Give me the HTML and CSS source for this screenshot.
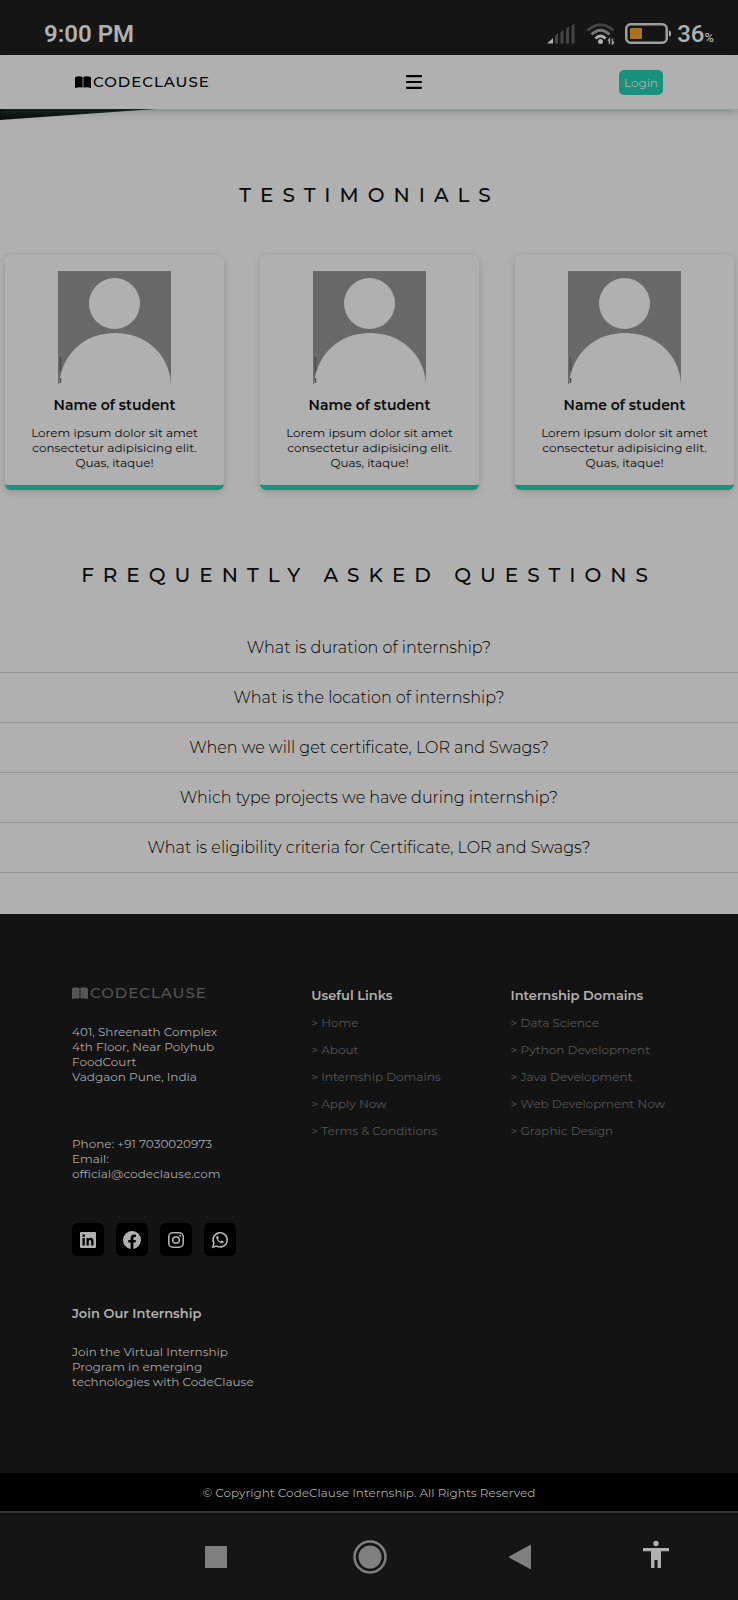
FILE: index.html
```html
<!DOCTYPE html>
<html lang="en">
<head>
<meta charset="utf-8">
<meta name="viewport" content="width=device-width, initial-scale=1">
<title>CodeClause Internship</title>
<link rel="stylesheet" href="styles.css">
</head>
<body>
<svg class="sprite" aria-hidden="true">
  <symbol id="book" viewBox="0 0 16 12"><path d="M0 1.200Q4-.6 7.600 .9V11.600Q4 10.600 0 12zM8.400 .9Q12-.6 16 1.200V12Q12 10.600 8.400 11.600z"/></symbol>
  <symbol id="person" viewBox="0 0 113 113"><path class="photo-back" d="M0 0h113v113H0z"/><circle class="photo-shape" cx="56.5" cy="32.500" r="25.500"/><path class="photo-shape" d="M1 113C4 82 27 62 57 62s54 20 56 51z"/><path class="photo-mark" d="M2.500 86v14M2.500 107v5"/></symbol>
</svg>

<div class="status">
  <span class="clock">9:00 PM</span>
  <div class="indicators">
    <svg class="signal" viewBox="0 0 28 20" aria-label="Signal"><path class="lit" d="M0 19.500 6 14v5.500z"/><path class="dim" d="M8 11.500l3-2v10H8zM13.500 8l3-2v13.500h-3zM19 4.500l3-2v17h-3zM24.500 1.500l3-1.500v19.500h-3z"/></svg>
    <svg class="wifi" viewBox="0 0 30 22" aria-label="Wi-Fi"><path class="arc dim-arc" d="M1.500 7.500Q14.500-4 27.500 7.500"/><path class="arc mid-arc" d="M5.500 11.500Q14.500 3 23.500 11.500"/><path class="arc" d="M9.500 15.500Q14.500 10.500 19.500 15.500"/><circle class="lit" cx="14.500" cy="18.500" r="2.500"/><path class="traffic" d="M23.500 21v-5l-1.500 2M26.500 15.500v5.500l1.500-2"/></svg>
    <svg class="battery" viewBox="0 0 46 22" aria-label="Battery"><rect class="case" x="1.250" y="1.250" width="40.500" height="18.500" rx="4.500"/><rect class="charge" x="5" y="5" width="12" height="11" rx="1"/><path class="lit" d="M44 7.500q2 0 2 2v2q0 2-2 2z"/></svg>
    <span class="percent">36<small>%</small></span>
  </div>
</div>

<header class="nav">
  <a class="brand" href="#"><svg class="book"><use href="#book"/></svg>CODECLAUSE</a>
  <button class="menu" type="button" aria-label="Menu"><svg viewBox="0 0 16 14"><path d="M1 1.200h14M1 7h14M1 12.800h14"/></svg></button>
  <button class="login" type="button">Login</button>
</header>

<main class="main">
  <svg class="wedge" viewBox="0 0 155 11" aria-hidden="true"><path d="M0 0h155L0 11z"/></svg>

  <section class="testimonials">
    <h2 class="title">TESTIMONIALS</h2>
    <div class="cards">
      <article class="card">
        <svg class="photo" role="img" aria-label="Student"><use href="#person"/></svg>
        <h3 class="name">Name of student</h3>
        <p class="quote">Lorem ipsum dolor sit amet<br>consectetur adipisicing elit.<br>Quas, itaque!</p>
      </article>
      <article class="card">
        <svg class="photo" role="img" aria-label="Student"><use href="#person"/></svg>
        <h3 class="name">Name of student</h3>
        <p class="quote">Lorem ipsum dolor sit amet<br>consectetur adipisicing elit.<br>Quas, itaque!</p>
      </article>
      <article class="card">
        <svg class="photo" role="img" aria-label="Student"><use href="#person"/></svg>
        <h3 class="name">Name of student</h3>
        <p class="quote">Lorem ipsum dolor sit amet<br>consectetur adipisicing elit.<br>Quas, itaque!</p>
      </article>
    </div>
  </section>

  <section class="faq">
    <h2 class="title">FREQUENTLY ASKED QUESTIONS</h2>
    <div class="questions">
      <button class="question" type="button">What is duration of internship?</button>
      <button class="question" type="button">What is the location of internship?</button>
      <button class="question" type="button">When we will get certificate, LOR and Swags?</button>
      <button class="question" type="button">Which type projects we have during internship?</button>
      <button class="question" type="button">What is eligibility criteria for Certificate, LOR and Swags?</button>
    </div>
  </section>
</main>

<footer class="footer">
  <div class="columns">
    <div class="about">
      <a class="brand muted" href="#"><svg class="book"><use href="#book"/></svg>CODECLAUSE</a>
      <address class="address">401, Shreenath Complex<br>4th Floor, Near Polyhub<br>FoodCourt<br>Vadgaon Pune, India</address>
      <p class="contact">Phone: +91 7030020973<br>Email:<br>official@codeclause.com</p>
      <div class="social">
        <a class="tile" href="#" aria-label="LinkedIn"><svg viewBox="0 0 18 18"><path fill-rule="evenodd" d="M2 1h14a1 1 0 0 1 1 1v14a1 1 0 0 1-1 1H2a1 1 0 0 1-1-1V2a1 1 0 0 1 1-1zM3.500 7v7.500h2.300V7zM4.650 3.300a1.350 1.350 0 1 0 0 2.700 1.350 1.350 0 0 0 0-2.700zM7.500 7v7.500h2.300v-3.900c0-2 2.400-2 2.400 0v3.900h2.300V10c0-3.500-3.500-3.900-4.700-2V7z"/></svg></a>
        <a class="tile" href="#" aria-label="Facebook"><svg viewBox="0 0 18 18"><path d="M18 9a9 9 0 1 0-10.400 8.900v-6.300H5.300V9h2.300V7c0-2.300 1.300-3.500 3.400-3.500 1 0 2 .2 2 .2v2.200h-1.100c-1.100 0-1.500.7-1.500 1.400V9h2.500l-.4 2.600h-2.100v6.300A9 9 0 0 0 18 9z"/></svg></a>
        <a class="tile" href="#" aria-label="Instagram"><svg class="lined" viewBox="0 0 18 18"><rect x="1.800" y="1.800" width="14.400" height="14.400" rx="4"/><circle cx="9" cy="9" r="3.300"/><circle class="dot" cx="13.200" cy="4.800" r="1"/></svg></a>
        <a class="tile" href="#" aria-label="WhatsApp"><svg class="lined" viewBox="0 0 18 18"><path d="M1.800 16.200l1.100-3.900a7.100 7.100 0 1 1 2.800 2.800z"/><path class="dot" d="M6.500 4.800c-.6 0-1.300.8-1.300 1.800 0 2.300 3.300 5.700 5.700 5.700 1.100 0 2-.8 2-1.600 0-.5-1.800-1.300-2.200-1.300-.4 0-.7 1-1.100 1-.8 0-2.500-1.600-2.500-2.200 0-.3.700-.7.700-1.200S7.100 4.800 6.500 4.800z"/></svg></a>
      </div>
      <h3 class="heading">Join Our Internship</h3>
      <p class="join">Join the Virtual Internship<br>Program in emerging<br>technologies with CodeClause</p>
    </div>
    <nav class="links" aria-label="Useful Links">
      <h3 class="heading">Useful Links</h3>
      <a href="#">&gt; Home</a>
      <a href="#">&gt; About</a>
      <a href="#">&gt; Internship Domains</a>
      <a href="#">&gt; Apply Now</a>
      <a href="#">&gt; Terms &amp; Conditions</a>
    </nav>
    <nav class="links" aria-label="Internship Domains">
      <h3 class="heading">Internship Domains</h3>
      <a href="#">&gt; Data Science</a>
      <a href="#">&gt; Python Development</a>
      <a href="#">&gt; Java Development</a>
      <a href="#">&gt; Web Development Now</a>
      <a href="#">&gt; Graphic Design</a>
    </nav>
  </div>
  <p class="copyright">© Copyright CodeClause Internship. All Rights Reserved</p>
</footer>

<div class="system">
  <button class="key" type="button" aria-label="Recent apps"><svg viewBox="0 0 34 34"><rect x="6" y="6" width="22" height="22" rx="1"/></svg></button>
  <button class="key" type="button" aria-label="Home"><svg viewBox="0 0 34 34"><circle class="ring" cx="17" cy="17" r="15.500"/><circle cx="17" cy="17" r="11.500"/></svg></button>
  <button class="key" type="button" aria-label="Back"><svg viewBox="0 0 34 34"><path d="M6.500 16.200 27 5q1-.5 1 .7v22.600q0 1.200-1 .7L6.500 17.800q-1-.8 0-1.600z"/></svg></button>
  <button class="key bright" type="button" aria-label="Accessibility"><svg viewBox="0 0 34 34"><circle cx="17" cy="3.500" r="2.700"/><path d="M4 8h26v3.200h-8V28h-3.500v-8h-3v8H12V11.200H4z"/></svg></button>
</div>
</body>
</html>
```
FILE: styles.css
```css
* {
  box-sizing: border-box;
}

body {
  margin: 0;
  background: #b0b0b0;
  color: #0a0a0a;
  font-family: Montserrat, Inter, "Open Sans", sans-serif;
  font-size: 12px;
  line-height: 15px;
}

h2, h3, p {
  margin: 0;
}

a {
  color: inherit;
  text-decoration: none;
}

button {
  padding: 0;
  border: 0;
  background: none;
  color: inherit;
  font: inherit;
}

svg {
  display: block;
}

.sprite {
  display: none;
}

/* Phone status bar */
.status {
  display: flex;
  align-items: center;
  justify-content: space-between;
  height: 55px;
  padding: 13px 24px 0 44px;
  background: #151515;
  color: #b0b0b0;
  font-family: Roboto, sans-serif;
  font-size: 24px;
  font-weight: 500;
  line-height: 26px;
}

.clock {
  font-weight: 600;
}

.indicators {
  display: flex;
  align-items: center;
}

.signal {
  width: 28px;
  height: 20px;
  margin-right: 11px;
}

.wifi {
  width: 30px;
  height: 22px;
  margin-right: 9px;
}

.battery {
  width: 46px;
  height: 22px;
  margin-right: 6px;
}

.lit {
  fill: #b0b0b0;
}

.dim {
  fill: #444;
}

.arc {
  fill: none;
  stroke: #b0b0b0;
  stroke-width: 3;
}

.mid-arc {
  stroke: #777;
}

.dim-arc {
  stroke: #444;
}

.traffic {
  fill: none;
  stroke: #999;
  stroke-width: 1.5;
}

.case {
  fill: none;
  stroke: #a0a0a0;
  stroke-width: 2.5;
}

.charge {
  fill: #a87320;
}

.percent small {
  font-size: 13px;
  line-height: 1;
}

/* Site header */
.nav {
  position: relative;
  display: flex;
  align-items: center;
  justify-content: space-between;
  height: 54px;
  padding: 0 75px;
  background: #b0b0b0;
  box-shadow: 0 3px 8px rgba(50, 80, 75, 0.35);
}

.brand {
  display: flex;
  align-items: center;
  gap: 2px;
  color: #000;
  font-size: 15px;
  font-weight: 500;
  letter-spacing: 1px;
  line-height: 18px;
}

.book {
  width: 16px;
  height: 12px;
  fill: currentColor;
}

.menu svg {
  width: 16px;
  height: 14px;
  stroke: #000;
  stroke-width: 2.2;
  stroke-linecap: round;
  overflow: visible;
}

.login {
  padding: 4px 5px;
  border-radius: 5px;
  background: #18917d;
  color: #b0b0b0;
  line-height: 17px;
}

/* Page content */
.wedge {
  width: 21%;
  height: 11px;
  fill: #0d1211;
}

.title {
  font-size: 20px;
  font-weight: 500;
  letter-spacing: 9px;
  line-height: 24px;
  text-align: center;
}

.testimonials {
  padding: 63px 4px 0 5px;
}

.cards {
  display: grid;
  grid-template-columns: repeat(3, 1fr);
  gap: 36px;
  margin-top: 48px;
}

.card {
  display: flex;
  flex-direction: column;
  align-items: center;
  padding: 16px 8px 15px;
  border-bottom: 5px solid #18917d;
  border-radius: 6px;
  box-shadow: 0 2px 7px rgba(0, 0, 0, 0.15);
  text-align: center;
}

.photo {
  width: 113px;
  height: 113px;
}

.photo-back {
  fill: #696969;
}

.photo-shape {
  fill: #b0b0b0;
}

.photo-mark {
  stroke: #4c4c4c;
  stroke-width: 1.5;
}

.name {
  margin: 12px 0 11px;
  font-size: 14px;
  font-weight: 600;
  line-height: 18px;
}

.faq {
  padding: 73px 0 41px;
}

.questions {
  margin-top: 36px;
}

.question {
  display: block;
  width: 100%;
  height: 50px;
  border-bottom: 1px solid #959595;
  color: #000;
  font-size: 16px;
  font-weight: 300;
}

/* Footer */
.footer {
  background: #131313;
  color: #a8a8a8;
}

.columns {
  display: grid;
  grid-template-columns: 6fr 5fr 4fr;
  padding: 70px 68px 84px 72px;
}

.muted {
  color: #555;
}

.address {
  margin: 22px 0 52px;
  font-style: normal;
}

.social {
  display: flex;
  gap: 12px;
  margin: 42px 0 48px;
}

.tile {
  display: grid;
  place-items: center;
  width: 32px;
  height: 33px;
  border-radius: 5px;
  background: #000;
}

.tile svg {
  width: 18px;
  height: 18px;
  fill: #b0b0b0;
}

.tile .lined {
  fill: none;
  stroke: #b0b0b0;
  stroke-width: 1.6;
}

.tile .dot {
  fill: #b0b0b0;
  stroke: none;
}

.heading {
  color: #b0b0b0;
  font-size: 13px;
  font-weight: 600;
  line-height: 18px;
}

.join {
  margin-top: 22px;
}

.links {
  display: flex;
  flex-direction: column;
  gap: 12px;
  padding-top: 2px;
  color: #555;
  white-space: nowrap;
}

.links .heading {
  margin-bottom: -1px;
}

.copyright {
  padding: 12px 0 11px;
  border-bottom: 2px solid #333;
  background: #000;
  text-align: center;
}

/* Phone navigation keys */
.system {
  display: grid;
  grid-template-columns: 154fr 153fr 148fr 124fr;
  justify-items: center;
  padding: 27px 20px 26px 139px;
  background: #151515;
}

.key svg {
  width: 34px;
  height: 34px;
  fill: #808080;
}

.key .ring {
  fill: none;
  stroke: #808080;
  stroke-width: 2.5;
}

.bright svg {
  fill: #b0b0b0;
}
```
